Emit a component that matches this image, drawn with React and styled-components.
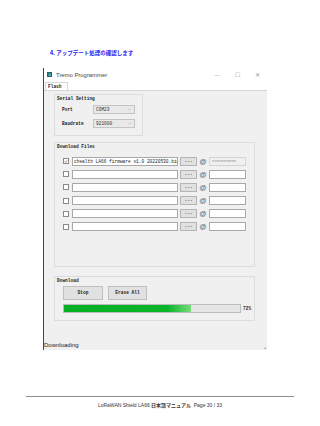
import React from "react";
import styled, { createGlobalStyle } from "styled-components";
import { ChevronDown } from "lucide-react";

const GlobalStyle = createGlobalStyle`
  html, body {
    margin: 0;
    padding: 0;
    background: #ffffff;
  }
  * {
    box-sizing: border-box;
  }
`;

const Page = styled.div`
  width: 320px;
  height: 426px;
  padding-top: 50px;
  display: flex;
  flex-direction: column;
  overflow: hidden;
  background: #fff;
`;

const Heading = styled.h4`
  margin: 0 0 0 50px;
  font-family: "Noto Sans CJK JP", "Liberation Sans", sans-serif;
  font-size: 5.5px;
  line-height: 7px;
  font-weight: 700;
  color: #1c1cf0;
`;

const Window = styled.div`
  margin: 10.5px 0 0 43px;
  width: 224px;
  height: 282px;
  border-left: 1px solid #444;
  display: flex;
  flex-direction: column;
  font-family: "Liberation Mono", monospace;
  font-size: 4.5px;
  color: #222;
`;

const TitleBar = styled.div`
  height: 14px;
  background: #fff;
  display: flex;
  align-items: center;
  padding-left: 3px;
  font-family: "Liberation Sans", sans-serif;
  font-size: 5.9px;
  color: #444;
`;

const AppIcon = styled.span`
  width: 5px;
  height: 5px;
  margin-right: 4px;
  background: linear-gradient(135deg, #2f8f6f 50%, #5aa8d8 50%);
  border: 1px solid #2b5e7a;
`;

const Controls = styled.div`
  margin-left: auto;
  display: flex;
`;

const Control = styled.span`
  width: 20px;
  display: flex;
  justify-content: center;
  align-items: center;
  color: #999;
  font-size: ${(p) => p.$size || 5}px;
`;

const TabStrip = styled.div`
  height: 9px;
  background: #fff;
  border-bottom: 1px solid #d6d6d6;
  display: flex;
  align-items: flex-end;
`;

const Tab = styled.div`
  margin-left: 1px;
  width: 23px;
  height: 8px;
  border: 1px solid #d6d6d6;
  border-bottom: none;
  background: #fff;
  font-weight: 700;
  padding-left: 2px;
  line-height: 7px;
`;

const Body = styled.div`
  flex: 1;
  background: #f0f0f0;
  padding: 3px 12px 0 10px;
  display: flex;
  flex-direction: column;
`;

const Group = styled.div`
  border: 1px solid #dcdcdc;
  width: ${(p) => p.$w}px;
  height: ${(p) => p.$h}px;
  margin-top: ${(p) => p.$mt || 0}px;
  padding: 1px 0 0 2px;
  display: flex;
  flex-direction: column;
`;

const GroupTitle = styled.div`
  height: 6px;
  line-height: 6px;
  font-weight: 700;
`;

const SerialRows = styled.div`
  margin-top: 3px;
  padding-left: 5px;
  display: flex;
  flex-direction: column;
  gap: 5px;
`;

const SerialRow = styled.div`
  display: flex;
  align-items: center;
  height: 9px;
`;

const FieldLabel = styled.span`
  width: 31px;
  font-weight: 700;
`;

const Combo = styled.div`
  width: 42px;
  height: 9px;
  border: 1px solid #c4c4c4;
  background: #e9e9e9;
  display: flex;
  align-items: center;
  padding: 0 2px;
  justify-content: space-between;
  color: #333;
`;

const FileRows = styled.div`
  margin-top: 7px;
  padding-left: 6px;
  display: flex;
  flex-direction: column;
  gap: 4.2px;
`;

const FileRow = styled.div`
  display: flex;
  align-items: center;
  height: 9px;
`;

const Check = styled.span`
  width: 6px;
  height: 6px;
  border: 1px solid #8a8a8a;
  background: #fff;
  margin-right: 3px;
  display: flex;
  align-items: center;
  justify-content: center;
`;

const TextInput = styled.div`
  width: ${(p) => p.$w}px;
  height: 9px;
  border: 1px solid ${(p) => (p.$disabled ? "#d4d4d4" : "#a8a8a8")};
  background: ${(p) => (p.$disabled ? "#f0f0f0" : "#fff")};
  color: ${(p) => (p.$disabled ? "#999" : "#222")};
  font-size: ${(p) => (p.$disabled ? 4 : 4.5)}px;
  line-height: 7px;
  padding-left: ${(p) => (p.$disabled ? 2 : 1)}px;
  white-space: nowrap;
  overflow: hidden;
`;

const Browse = styled.span`
  width: 17px;
  height: 9px;
  margin-left: 2px;
  border: 1px solid #b4b4b4;
  background: #e1e1e1;
  text-align: center;
  line-height: 6px;
  font-weight: 700;
`;

const At = styled.span`
  width: 8px;
  margin: 0 2px 0 2px;
  text-align: center;
  font-family: "Liberation Sans", sans-serif;
  font-weight: 700;
  font-size: 7px;
  color: #666;
`;

const ButtonRow = styled.div`
  margin-top: 2px;
  padding-left: 6px;
  display: flex;
  gap: 5px;
`;

const Button = styled.span`
  width: ${(p) => p.$w}px;
  height: 14px;
  border: 1px solid #c0c0c0;
  background: #e1e1e1;
  display: flex;
  align-items: center;
  justify-content: center;
  font-weight: 700;
`;

const ProgressRow = styled.div`
  margin-top: 4px;
  padding-left: 6px;
  display: flex;
  align-items: center;
  gap: 2px;
`;

const Track = styled.div`
  width: 178px;
  height: 9px;
  border: 1px solid #bcbcbc;
  background: #e6e6e6;
`;

const Fill = styled.div`
  height: 100%;
  background: linear-gradient(to right, #06b025 0%, #0ab52a 82%, #76dc7a 100%);
`;

const Percent = styled.span`
  font-size: 4.5px;
  font-weight: 700;
`;

const StatusBar = styled.div`
  height: 10px;
  background: #f0f0f0;
  display: flex;
  align-items: center;
  font-family: "Liberation Sans", sans-serif;
  font-size: 6px;
  color: #222;
  position: relative;
`;

const Grip = styled.span`
  position: absolute;
  right: 1px;
  bottom: 1px;
  width: 3px;
  height: 3px;
  background: linear-gradient(135deg, transparent 50%, #bbb 50%);
`;

const Footer = styled.footer`
  margin: 46px 26px 0 26px;
  border-top: 1px solid #8c8c8c;
  padding-top: 4px;
  text-align: center;
  font-family: "Liberation Sans", "Noto Sans CJK JP", sans-serif;
  font-size: 5px;
  line-height: 7px;
  color: #333;
  b {
    font-family: "Noto Sans CJK JP", sans-serif;
  }
`;

const files = [
  "chealth LA66 firmware v1.0 20220530.bin",
  "",
  "",
  "",
  "",
  "",
];

const App = () => {
  const progress = 72;
  return (
    <Page>
      <GlobalStyle />
      <Heading>4. アップデート処理の確認します</Heading>
      <Window>
        <TitleBar>
          <AppIcon />
          Tremo Programmer
          <Controls>
            <Control>—</Control>
            <Control $size={6}>☐</Control>
            <Control $size={6}>✕</Control>
          </Controls>
        </TitleBar>
        <TabStrip>
          <Tab>Flash</Tab>
        </TabStrip>
        <Body>
          <Group $w={89} $h={42}>
            <GroupTitle>Serial Setting</GroupTitle>
            <SerialRows>
              <SerialRow>
                <FieldLabel>Port</FieldLabel>
                <Combo>
                  COM23
                  <ChevronDown size={5} strokeWidth={1.5} color="#888" />
                </Combo>
              </SerialRow>
              <SerialRow>
                <FieldLabel>Baudrate</FieldLabel>
                <Combo>
                  921600
                  <ChevronDown size={5} strokeWidth={1.5} color="#888" />
                </Combo>
              </SerialRow>
            </SerialRows>
          </Group>

          <Group $w={201} $h={125} $mt={6}>
            <GroupTitle>Download Files</GroupTitle>
            <FileRows>
              {files.map((f, i) => (
                <FileRow key={i}>
                  <Check>
                    {i === 0 && (
                      <svg width="5" height="5" viewBox="0 0 10 10">
                        <path d="M2 5 L4 7.5 L8 2.5" fill="none" stroke="#444" strokeWidth="1.4" />
                      </svg>
                    )}
                  </Check>
                  <TextInput $w={106}>{f}</TextInput>
                  <Browse>...</Browse>
                  <At>@</At>
                  <TextInput $w={37} $disabled={i === 0}>
                    {i === 0 ? "0x08000000" : ""}
                  </TextInput>
                </FileRow>
              ))}
            </FileRows>
          </Group>

          <Group $w={201} $h={45} $mt={9}>
            <GroupTitle>Download</GroupTitle>
            <ButtonRow>
              <Button $w={40}>Stop</Button>
              <Button $w={39}>Erase All</Button>
            </ButtonRow>
            <ProgressRow>
              <Track>
                <Fill style={{ width: `${progress}%` }} />
              </Track>
              <Percent>{progress}%</Percent>
            </ProgressRow>
          </Group>
        </Body>
        <StatusBar>
          Downloading
          <Grip />
        </StatusBar>
      </Window>
      <Footer>
        LoRaWAN Shield LA66 <b>日本語マニュアル</b>&nbsp;&nbsp;Page 30 / 33
      </Footer>
    </Page>
  );
};

export default App;
